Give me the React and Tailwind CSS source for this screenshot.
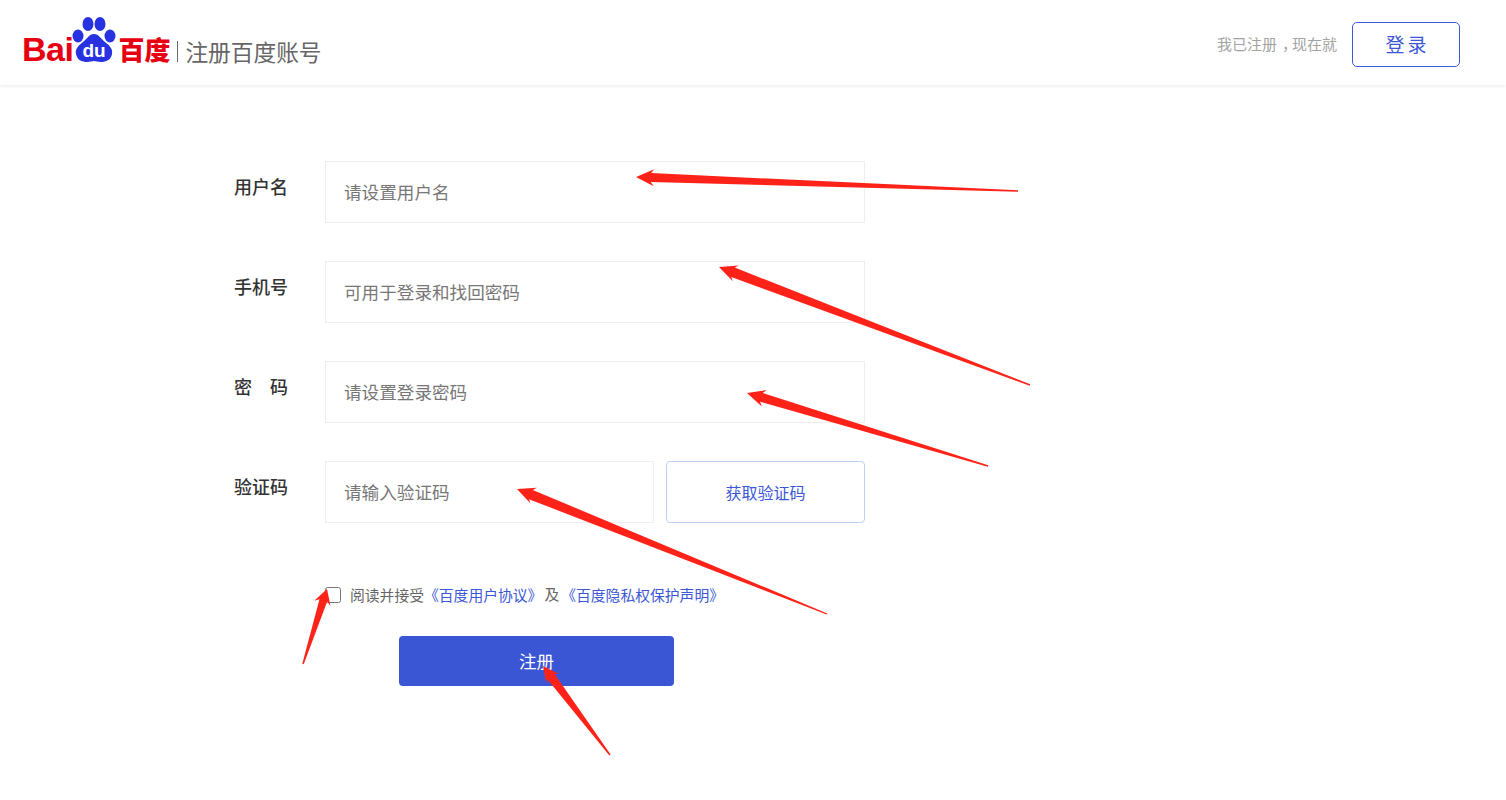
const FONT = '"Noto Sans CJK SC", sans-serif'

// 红色标注箭头:从 tail 尖端逐渐变宽到 tip 处的箭头
const arrowPoints = ([tipX, tipY], [tailX, tailY], shaft = 6, head = 17, back = 15) => {
  const len = Math.hypot(tailX - tipX, tailY - tipY)
  const ux = (tailX - tipX) / len
  const uy = (tailY - tipY) / len
  const nx = -uy
  const ny = ux
  const at = (d, w) => `${(tipX + ux * d + nx * w).toFixed(1)},${(tipY + uy * d + ny * w).toFixed(1)}`
  return [
    at(0, 0),
    at(back + 3, head / 2),
    at(back, shaft / 2),
    at(len, 0.7),
    at(len, -0.7),
    at(back, -shaft / 2),
    at(back + 3, -head / 2),
  ].join(' ')
}

const ARROWS = [
  { tip: [636, 177], tail: [1018, 191], shaft: 9 },
  { tip: [719, 267], tail: [1030, 385], shaft: 10 },
  { tip: [747, 393], tail: [988, 466], shaft: 9 },
  { tip: [517, 489], tail: [827, 614], shaft: 10 },
  { tip: [327, 589], tail: [303, 664], shaft: 8, head: 17, back: 12 },
  { tip: [543, 666], tail: [610, 755], shaft: 9, head: 16, back: 13 },
]

const Logo = () => (
  <div className="flex items-end">
    <span className="font-bold text-[34px] leading-[32px] tracking-[-0.5px] text-[#e60012] mb-[-3px] ml-[-1px]" style={{ fontFamily: '"Liberation Sans", sans-serif' }}>Bai</span>
    <svg width="46" height="47" viewBox="0 0 46 47" className="mb-[-1px] ml-[-2px]">
      <ellipse cx="7" cy="20" rx="5.5" ry="6.5" fill="#2932e1" />
      <ellipse cx="17" cy="8" rx="5.5" ry="7" fill="#2932e1" />
      <ellipse cx="29" cy="8" rx="5.5" ry="7" fill="#2932e1" />
      <ellipse cx="39" cy="20" rx="5.5" ry="6.5" fill="#2932e1" />
      <path d="M23 18c5 0 7 5 11 8 5 4 8 7 7 12-1 6-6 8-11 8-3 0-5-1-7-1s-4 1-7 1c-5 0-10-2-11-8-1-5 2-8 7-12 4-3 6-8 11-8z" fill="#2932e1" />
      <text x="23" y="41" textAnchor="middle" fontSize="19" fontWeight="700" fill="#fff" fontFamily="Liberation Sans, sans-serif">du</text>
    </svg>
    <span className="font-black text-[26px] leading-[26px] text-[#e60012] ml-[1px]" style={{ fontFamily: FONT }}>百度</span>
    <span className="w-px h-[21px] bg-[#666] ml-[7px] mr-[7px]" />
    <span className="text-[22.7px] leading-[26px] text-[#666] mb-[-3px]">注册百度账号</span>
  </div>
)

const Field = ({ label, placeholder }) => (
  <div className="flex items-start mb-[38px]">
    <label className="w-[91px] pt-[11px] text-[18px] leading-[28px] font-medium text-[#333] whitespace-pre">{label}</label>
    <div className="w-[540px] h-[62px] border border-[#eeeeee] pl-[18px] flex items-center text-[17.6px] text-[#777]">{placeholder}</div>
  </div>
)

export default function App() {
  return (
    <div className="relative h-[800px] bg-white overflow-hidden" style={{ fontFamily: FONT }}>
      <header className="h-[85px] flex items-center justify-between pl-[23px] pr-[46px] shadow-[0_1px_4px_rgba(0,0,0,0.08)]">
        <div className="mt-[-7px]"><Logo /></div>
        <div className="flex items-center pt-[4px]">
          <span className="text-[15px] text-[#a3a3a3] mr-[15px]">我已注册<span className="pl-[5px] tracking-[-5px]">，</span>现在就</span>
          <button className="w-[108px] h-[45px] pl-[3px] border border-[#3b5bdb] rounded-[5px] text-[19px] tracking-[3px] text-[#3b57d6]">登录</button>
        </div>
      </header>

      <main className="pt-[76px] pl-[234px]">
        <Field label="用户名" placeholder="请设置用户名" />
        <Field label="手机号" placeholder="可用于登录和找回密码" />
        <Field label="密　码" placeholder="请设置登录密码" />

        <div className="flex items-start">
          <label className="w-[91px] pt-[11px] text-[18px] leading-[28px] font-medium text-[#333]">验证码</label>
          <div className="w-[329px] h-[62px] border border-[#eeeeee] pl-[18px] flex items-center text-[17.6px] text-[#777]">请输入验证码</div>
          <button className="w-[199px] h-[62px] ml-[12px] border border-[#bdd3fb] rounded-[4px] text-[16px] text-[#3b57d6]">获取验证码</button>
        </div>

        <div className="flex items-center ml-[91px] mt-[61px] h-[22px] text-[14.8px] text-[#666]">
          <input type="checkbox" className="w-[16px] h-[16px] mr-[9px]" />
          <span>阅读并接受</span>
          <a className="pr-[2px] text-[#3b57d6]">《百度用户协议》</a>
          <span className="mr-[2px] mt-[-2px]">及</span>
          <a className="text-[#3b57d6]">《百度隐私权保护声明》</a>
        </div>

        <button className="block w-[275px] h-[50px] ml-[165px] mt-[30px] rounded-[4px] bg-[#3a56d4] text-[17.5px] text-white">注册</button>
      </main>

      {/* 标注箭头 */}
      <svg className="absolute inset-0 pointer-events-none" width="1506" height="800">
        {ARROWS.map((a, i) => (
          <polygon key={i} points={arrowPoints(a.tip, a.tail, a.shaft, a.head, a.back)} fill="#ff2218" />
        ))}
      </svg>
    </div>
  )
}
